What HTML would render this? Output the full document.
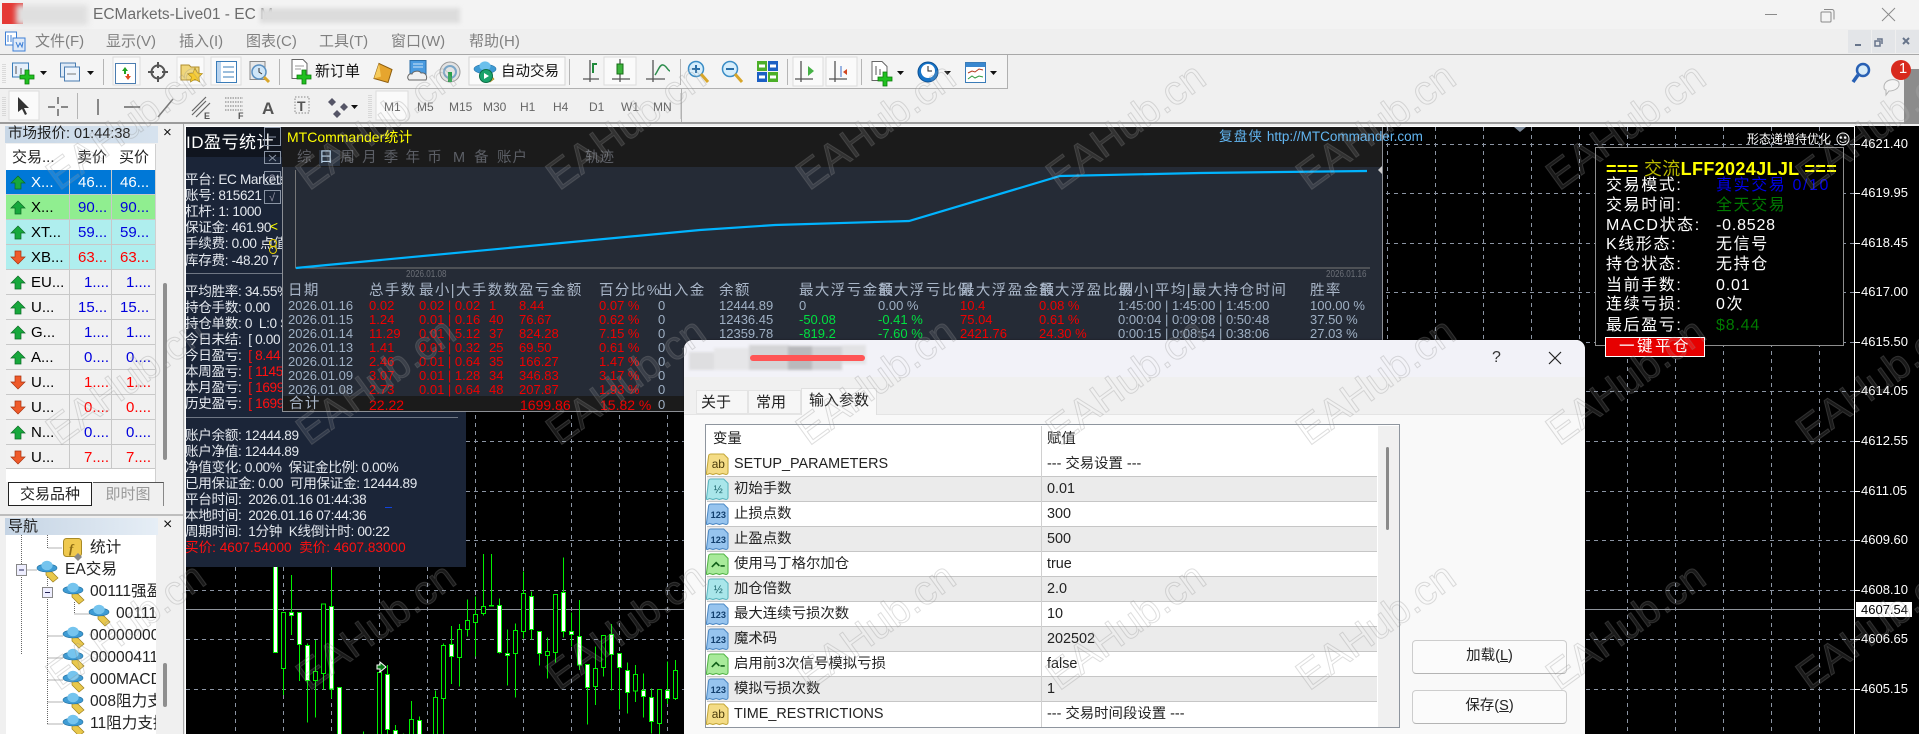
<!DOCTYPE html>
<html lang="zh"><head><meta charset="utf-8"><title>ECMarkets-Live01</title>
<style>
html,body{margin:0;padding:0;width:1919px;height:734px;overflow:hidden;background:#f0f0f0}
body{position:relative;font-family:"Liberation Sans","Noto Sans CJK SC",sans-serif;font-size:15px;color:#000}
.a{position:absolute}
.t{position:absolute;white-space:nowrap;line-height:18px;height:18px}
svg{position:absolute;overflow:visible}
.m{font-size:15px;color:#808080;top:33px}
.tf{font-size:12px;color:#666;top:98px}
.n{font-size:13.6px;color:#e4e8ee;left:185px;letter-spacing:-.35px}
.r{color:#ff1010}
.h{font-size:14.5px;letter-spacing:1.4px;color:#a9b6c8}
.d{font-size:13px;color:#9fb0c4}
.rd{font-size:13px;color:#f00000}
.gr{font-size:13px;color:#00e040}
.p{font-size:13px;color:#fff;left:1861px}
.e{font-size:16px;letter-spacing:1.6px;color:#fff}
.mw{font-size:15px}
.tr{font-size:15.6px;color:#222}
.q{font-size:14.4px;color:#222}
.rw{position:absolute;left:707px;width:670px;height:24px;border-bottom:1px solid #c6c6c6}
.btn{position:absolute;left:1412px;width:153px;height:32px;background:#fbfbfb;border:1px solid #cdcdcd;border-radius:4px;text-align:center;line-height:31px;font-size:14.5px;color:#222;border-bottom-color:#b4b4b4}
.sd{font-size:10.5px;color:#6c7078;transform:scaleX(.77);transform-origin:0 0;top:265px}
</style></head><body>

<!-- title / menu bars -->
<div class="a" style="left:0;top:0;width:1919px;height:29px;background:#f3f3f3"></div>
<div class="a" style="left:0;top:29px;width:1919px;height:25px;background:#efefef"></div>
<div class="a" style="left:0;top:54px;width:1919px;height:1px;background:#a8a8a8"></div>
<div class="a" style="left:0;top:55px;width:1007px;height:33px;background:#f4f4f4;border-bottom:1px solid #b0b0b0;border-right:1px solid #b0b0b0"></div>
<div class="a" style="left:0;top:89px;width:681px;height:33px;border-right:1px solid #b0b0b0"></div>
<div class="a" style="left:0;top:122px;width:1919px;height:2px;background:#9b9b9b"></div>
<div class="a" style="left:2px;top:3px;width:21px;height:21px;background:#e53935"></div>
<div class="a" style="left:16px;top:5px;width:72px;height:20px;background:#dfdfdf;filter:blur(3px)"></div>
<span class="t" style="left:93px;top:6px;font-size:15.5px;color:#6c6c6c">ECMarkets-Live01 - EC M</span>
<div class="a" style="left:260px;top:8px;width:200px;height:15px;background:#dcdcdc;filter:blur(2px)"></div>
<svg style="left:5px;top:30px" width="21" height="22"><rect x="0.5" y="2" width="11" height="13" fill="#fff" stroke="#3d7fd6"/><rect x="8" y="8" width="12" height="13" fill="#dfeaf8" stroke="#3d7fd6"/><path d="M3 5v7M6 5v7M11 12l2 5 2-4 2 4 1-5" fill="none" stroke="#3d7fd6"/></svg>
<span class="t m" style="left:35px">文件(F)</span><span class="t m" style="left:106px">显示(V)</span><span class="t m" style="left:179px">插入(I)</span><span class="t m" style="left:246px">图表(C)</span><span class="t m" style="left:319px">工具(T)</span><span class="t m" style="left:391px">窗口(W)</span><span class="t m" style="left:469px">帮助(H)</span>

<!-- window buttons -->
<svg style="left:1760px;top:4px" width="150" height="22" fill="none" stroke="#8a8a8a" stroke-width="1"><path d="M5 10.5h12"/><path d="M64 5.5h8a2 2 0 0 1 2 2v8M62 8h8a1 1 0 0 1 1 1v8a1 1 0 0 1-1 1h-8a1 1 0 0 1-1-1V9a1 1 0 0 1 1-1z"/><path d="M122 4l13 13M135 4l-13 13"/></svg>
<div class="a" style="left:1848px;top:30px;width:23px;height:23px;background:#e3e5e8"></div>
<div class="a" style="left:1872px;top:30px;width:23px;height:23px;background:#e3e5e8"></div>
<div class="a" style="left:1896px;top:30px;width:23px;height:23px;background:#e3e5e8"></div>
<svg style="left:1848px;top:30px" width="71" height="23" fill="none" stroke="#67748a" stroke-width="2"><path d="M7 15h6"/><path stroke-width="1.5" d="M29 9h5v5M27 11h5v5h-5z"/><path d="M55 8l6 6M61 8l-6 6"/></svg>

<!-- toolbar 1 icons -->
<svg style="left:0;top:55px" width="1007" height="33">
<defs>
<g id="plus"><path d="M5 0h4v5h5v4H9v5H5V9H0V5h5z" fill="#20c020" stroke="#0b7b0b" stroke-width=".8"/></g>
<g id="dd"><path d="M0 0h7l-3.5 4z" fill="#111"/></g>
<g id="hat"><ellipse cx="11" cy="9" rx="11" ry="4.6" fill="#3e9bd4" stroke="#1f6fa5" stroke-width=".6"/><ellipse cx="11" cy="6" rx="5.6" ry="4.6" fill="#6bc0ec"/><path d="M11 12l5 2 4 5-4 3-5-5z" fill="#e8c64a" stroke="#a98a1f" stroke-width=".7"/></g>
</defs>
<path d="M3 9v19M5 9v19" stroke="#c0c0c0" stroke-dasharray="1 1"/>
<g transform="translate(12 6)"><rect x=".5" y="2" width="16" height="14" fill="#e6f0fb" stroke="#3a7cb8"/><path d="M4 5v8M9 7v6" stroke="#555"/><use href="#plus" x="8" y="9"/></g>
<use href="#dd" x="40" y="16"/>
<g transform="translate(60 6)"><rect x=".5" y="2" width="15" height="14" fill="#dfeaf6" stroke="#4a7cb0"/><rect x="4.500" y="6" width="15" height="14" fill="#eef4fb" stroke="#4a7cb0"/><path d="M7 13h9" stroke="#777"/></g>
<use href="#dd" x="87" y="16"/>
<path d="M103.500 4v26M279.500 4v26M569.500 4v26M680.500 4v26M787.500 4v26M861.500 4v26" stroke="#b5b5b5"/>
<rect x="113" y="2" width="27" height="28" fill="#fafafa" stroke="#dcdcdc"/>
<g transform="translate(115 8)"><rect x=".5" y=".5" width="20" height="20" fill="#fff" stroke="#4a7cb0"/><path d="M7 8l3-4 3 4h-2v3H9V8z" fill="#21a321"/><path d="M10 17l3-4h-2v-2H9v2H7z" fill="#e24a20" transform="translate(3 0)"/></g>
<g transform="translate(148 7)" fill="none" stroke="#555" stroke-width="2"><circle cx="10" cy="10" r="6.500"/><path d="M10 0v6M10 14v6M0 10h6M14 10h6"/></g>
<rect x="177" y="2" width="27" height="28" fill="#fafafa" stroke="#e2e2e2"/>
<g transform="translate(180 7)"><path d="M1 3h8l2 2h8v13H1z" fill="#f0d67a" stroke="#b08d2d"/><path d="M15 6l2.500 5 5 .6-3.700 3.400 1 5-4.800-2.600-4.600 2.600 1-5-3.800-3.400 5.300-.6z" fill="#f5c92e" stroke="#a58316" stroke-width=".6"/></g>
<rect x="211" y="2" width="30" height="28" fill="#fafafa" stroke="#dcdcdc"/>
<g transform="translate(216 6)"><rect x=".5" y=".5" width="20" height="21" fill="#fff" stroke="#3a7cb8"/><rect x="1" y="1" width="4" height="20" fill="#b9d4ef"/><path d="M7 6h11M7 11h11M7 16h11" stroke="#3a7cb8"/></g>
<g transform="translate(249 6)"><rect x="1" y=".5" width="15" height="18" fill="#e8e8e8" stroke="#888"/><circle cx="10" cy="11" r="7" fill="#cfe6f8" stroke="#5a8fc0" stroke-width="1.500"/><path d="M10 7v4l3 2" stroke="#333" fill="none"/><path d="M15 16l5 5" stroke="#d9a62a" stroke-width="3"/></g>
<g transform="translate(290 4)"><path d="M2 .5h11l4 4v15H2z" fill="#fff" stroke="#666"/><path d="M5 7h9M5 10h6" stroke="#999"/><use href="#plus" x="7" y="11"/></g>
<g transform="translate(372 8)"><path d="M7 .5l13 6-4 13-14-4z" fill="#e6a52e" stroke="#8c5d0e"/><path d="M7 .5L2 15.500l7-2z" fill="#f6cb5c"/></g>
<g transform="translate(407 5)"><rect x="3" y=".5" width="16" height="16" fill="#4a9be0" stroke="#2c6ea6"/><path d="M6 4h10M6 7h10" stroke="#cfe6f8"/><path d="M2 20c-3-3 0-7 3-6 1-3 7-4 9-1 4-1 7 3 5 7z" fill="#f0f0f0" stroke="#666"/></g>
<g transform="translate(440 6)" fill="none"><circle cx="10" cy="11" r="10" fill="#e3e3e3" stroke="#999"/><circle cx="10" cy="11" r="6" stroke="#7ba7c8" stroke-width="2"/><path d="M10 11v10" stroke="#27a14c" stroke-width="4"/></g>
<rect x="469" y="2" width="96" height="28" fill="#fbfbfb" stroke="#d4d4d4"/>
<g transform="translate(474 5)"><use href="#hat"/><circle cx="12" cy="16" r="6.500" fill="#19a36b" stroke="#0b6d44"/><path d="M10 13l5 3-5 3z" fill="#fff"/></g>
<g fill="none" stroke="#555" stroke-width="1.300"><path d="M590 5v22M583 24h16" /><path d="M617 5v22M610 24h20"/><path d="M653 5v22M646 24h19"/><path d="M801 6v22M795 24h16"/><path d="M835 6v22M829 24h18"/></g>
<path d="M593 18v-9h4" stroke="#1f8a3b" stroke-width="2" fill="none"/>
<rect x="604" y="2" width="32" height="28" fill="#fafafa" stroke="#dcdcdc"/>
<path d="M620 4v23M612 24h18" stroke="#555" stroke-width="1.300"/><rect x="617" y="9" width="6" height="10" fill="#3cb33c" stroke="#176d17"/>
<path d="M655 20c3-4 5-11 8-10 3 0 5 6 7 6" stroke="#2d8c4d" stroke-width="1.500" fill="none"/>
<g transform="translate(688 5)"><circle cx="8" cy="9" r="7.500" fill="#d6eefc" stroke="#3b8dc6" stroke-width="1.500"/><path d="M8 5v8M4 9h8" stroke="#2a6fa8" stroke-width="2"/><path d="M13 14l7 8" stroke="#d8a62a" stroke-width="3"/></g>
<g transform="translate(722 5)"><circle cx="8" cy="9" r="7.500" fill="#d6eefc" stroke="#3b8dc6" stroke-width="1.500"/><path d="M4 9h8" stroke="#2a6fa8" stroke-width="2"/><path d="M13 14l7 8" stroke="#d8a62a" stroke-width="3"/></g>
<g transform="translate(757 6)"><rect width="10" height="10" fill="#4caf28"/><rect x="11" width="10" height="10" fill="#1c5fc4"/><rect y="11" width="10" height="10" fill="#1c5fc4"/><rect x="11" y="11" width="10" height="10" fill="#4caf28"/><path d="M2 5h6M13 5h6M2 16h6M13 16h6" stroke="#fff" stroke-width="3"/></g>
<rect x="793" y="2" width="30" height="29" fill="#fafafa" stroke="#dcdcdc"/><rect x="826" y="2" width="31" height="29" fill="#fafafa" stroke="#dcdcdc"/>
<path d="M801 6v21M795 24h18" stroke="#555" stroke-width="1.300" fill="none"/><path d="M835 6v21M829 24h18" stroke="#555" stroke-width="1.300" fill="none"/>
<path d="M808 11l6 5-6 5z" fill="#45b245"/><path d="M841 11v11" stroke="#3a6ec9"/><path d="M847 14l-4 3 4 3z" fill="#d04520"/>
<g transform="translate(872 6)"><path d="M0 .5h10l5 5v14H0z" fill="#fff" stroke="#666"/><path d="M4 5v9M8 8v6" stroke="#555"/><use href="#plus" x="6" y="11"/></g><use href="#dd" x="897" y="16"/>
<g transform="translate(918 6)"><circle cx="10" cy="11" r="10" fill="#1674c8" stroke="#0d4f91"/><circle cx="10" cy="10" r="7" fill="#fff"/><path d="M10 5v5h4" stroke="#222" fill="none"/></g><use href="#dd" x="944" y="16"/>
<g transform="translate(965 7)"><rect x=".5" y=".5" width="20" height="20" fill="#fff" stroke="#3a7cb8"/><rect x="1" y="1" width="19" height="4" fill="#3a88d0"/><path d="M3 11l4-2 3 1 4-3 4 1" stroke="#b13a1e" fill="none"/><path d="M3 17l4-3 3 2 4-2 4 1" stroke="#2e9b3e" fill="none"/></g><use href="#dd" x="990" y="16"/>
</svg>
<span class="t" style="left:315px;top:63px;font-size:15px;color:#111">新订单</span>
<span class="t" style="left:501px;top:63px;font-size:14.5px;color:#111">自动交易</span>

<!-- right top icons -->
<svg style="left:1848px;top:60px" width="71" height="64"><rect x="56" y="9" width="15" height="55" fill="#8c8c8c"/><circle cx="15" cy="10" r="6" fill="#d8ecf9" stroke="#2860b4" stroke-width="2.500"/><path d="M10 15l-5 7" stroke="#2860b4" stroke-width="3.500"/><path d="M36 27c0-9 14-9 15-4 1 6-6 8-10 8l-3 4v-5c-2 0-2-2-2-3z" fill="#f4f4f4" stroke="#b4b4b4"/><circle cx="53" cy="10" r="10" fill="#d8291d"/></svg>
<span class="t" style="left:1896px;top:60px;width:14px;text-align:center;color:#fff;font-size:15px">1</span>

<!-- toolbar 2 -->
<svg style="left:0;top:89px" width="690" height="33">
<path d="M3 8v20M5 8v20M369 6v24M371 6v24" stroke="#c0c0c0" stroke-dasharray="1 1"/>
<path d="M77.500 4v26M681 4v26" stroke="#b5b5b5"/>
<rect x="9" y="2" width="30" height="29" fill="#fafafa" stroke="#dcdcdc"/>
<rect x="376" y="2" width="32" height="29" fill="#fafafa" stroke="#dcdcdc"/>
<path d="M18 8l11 11h-5l3 6-2 1-3-6-4 3z" fill="#333"/>
<path d="M58 8v7M58 20v7M48 18h7M61 18h7" stroke="#666" stroke-width="1.500" fill="none"/>
<path d="M98 10v16" stroke="#666" stroke-width="1.500"/>
<path d="M124 18h16" stroke="#666" stroke-width="1.500"/>
<path d="M158 28l15-18" stroke="#777" stroke-width="1.500"/>
<path d="M192 22l14-14M192 26l14-14M196 28l14-14" stroke="#666" stroke-width="1.200"/><text x="204" y="30" font-size="9" fill="#555" font-weight="bold">E</text>
<path d="M225 9h18M225 13h18M225 17h18M225 21h18" stroke="#777" stroke-dasharray="1.500 1" /><text x="238" y="30" font-size="9" fill="#555" font-weight="bold">F</text>
<text x="262" y="25" font-size="17" fill="#555" font-weight="bold">A</text>
<rect x="295" y="8" width="14" height="16" fill="none" stroke="#888" stroke-dasharray="1.500 1.500"/><text x="297" y="22" font-size="14" fill="#555" font-weight="bold">T</text>
<path d="M332 9l4 4-4 4-4-4zM344 14l4 4-4 4-4-4zM337 21l4 4-4 4-4-4z" fill="#556"/><path d="M351 16h7l-3.500 4z" fill="#111"/>
</svg>
<span class="t tf" style="left:384px">M1</span><span class="t tf" style="left:417px">M5</span><span class="t tf" style="left:449px">M15</span><span class="t tf" style="left:483px">M30</span><span class="t tf" style="left:520px">H1</span><span class="t tf" style="left:553px">H4</span><span class="t tf" style="left:589px">D1</span><span class="t tf" style="left:621px">W1</span><span class="t tf" style="left:653px">MN</span>

<!-- market watch -->
<div class="a" style="left:5px;top:126px;width:153px;height:17px;background:linear-gradient(90deg,#c8d7e6,#d6e2ee)"></div>
<span class="t" style="left:8px;top:125px;font-size:14.5px;color:#222">市场报价: 01:44:38</span>
<span class="t" style="left:163px;top:124px;font-size:15px;color:#111">×</span>
<div class="a" style="left:6px;top:144px;width:149px;height:338px;background:#fff"></div>
<div class="a" style="left:155px;top:144px;width:1px;height:338px;background:#d0d0d0"></div>
<span class="t mw" style="left:12px;top:149px;color:#222">交易...</span><span class="t mw" style="left:77px;top:149px;color:#222">卖价</span><span class="t mw" style="left:119px;top:149px;color:#222">买价</span>
<div class="a" style="left:6px;top:170px;width:149px;height:25px;background:#0078d7"></div>
<div class="a" style="left:6px;top:195px;width:149px;height:25px;background:#90ee90"></div>
<div class="a" style="left:6px;top:220px;width:149px;height:50px;background:#afeeee"></div>
<div class="a" style="left:6px;top:270px;width:149px;height:199px;background:#f1f1f1"></div>
<svg style="left:0;top:0" width="190" height="480"><path d="M69.500 170v299M111.500 170v299M6 194.500h149M6 219.500h149M6 244.500h149M6 269.500h149M6 294.500h149M6 319.500h149M6 344.500h149M6 369.500h149M6 394.500h149M6 419.500h149M6 444.500h149M6 468.500h149" stroke="#c8c8c8" fill="none"/>
<defs><path id="up" d="M7 0l7 7h-4v6H4V7H0z" fill="#17a83c" stroke="#0b6a24" stroke-width=".7"/><path id="dn" d="M4 0h6v6h4l-7 7-7-7h4z" fill="#ef5a2a" stroke="#a8320f" stroke-width=".7"/></defs>
<use href="#up" x="11" y="176"/><use href="#up" x="11" y="201"/><use href="#up" x="11" y="226"/><use href="#dn" x="11" y="251"/><use href="#up" x="11" y="276"/><use href="#up" x="11" y="301"/><use href="#up" x="11" y="326"/><use href="#up" x="11" y="351"/><use href="#dn" x="11" y="376"/><use href="#dn" x="11" y="401"/><use href="#up" x="11" y="426"/><use href="#dn" x="11" y="451"/></svg>
<span class="t mw" style="left:31px;top:174px;color:#fff">X...</span><span class="t mw" style="left:78px;top:174px;color:#fff">46...</span><span class="t mw" style="left:120px;top:174px;color:#fff">46...</span>
<span class="t mw" style="left:31px;top:199px">X...</span><span class="t mw" style="left:78px;top:199px;color:#00d">90...</span><span class="t mw" style="left:120px;top:199px;color:#00d">90...</span>
<span class="t mw" style="left:31px;top:224px">XT...</span><span class="t mw" style="left:78px;top:224px;color:#00d">59...</span><span class="t mw" style="left:120px;top:224px;color:#00d">59...</span>
<span class="t mw" style="left:31px;top:249px">XB...</span><span class="t mw" style="left:78px;top:249px;color:#f00">63...</span><span class="t mw" style="left:120px;top:249px;color:#f00">63...</span>
<span class="t mw" style="left:31px;top:274px">EU...</span><span class="t mw" style="left:84px;top:274px;color:#00d">1....</span><span class="t mw" style="left:126px;top:274px;color:#00d">1....</span>
<span class="t mw" style="left:31px;top:299px">U...</span><span class="t mw" style="left:78px;top:299px;color:#00d">15...</span><span class="t mw" style="left:120px;top:299px;color:#00d">15...</span>
<span class="t mw" style="left:31px;top:324px">G...</span><span class="t mw" style="left:84px;top:324px;color:#00d">1....</span><span class="t mw" style="left:126px;top:324px;color:#00d">1....</span>
<span class="t mw" style="left:31px;top:349px">A...</span><span class="t mw" style="left:84px;top:349px;color:#00d">0....</span><span class="t mw" style="left:126px;top:349px;color:#00d">0....</span>
<span class="t mw" style="left:31px;top:374px">U...</span><span class="t mw" style="left:84px;top:374px;color:#f00">1....</span><span class="t mw" style="left:126px;top:374px;color:#f00">1....</span>
<span class="t mw" style="left:31px;top:399px">U...</span><span class="t mw" style="left:84px;top:399px;color:#f00">0....</span><span class="t mw" style="left:126px;top:399px;color:#f00">0....</span>
<span class="t mw" style="left:31px;top:424px">N...</span><span class="t mw" style="left:84px;top:424px;color:#00d">0....</span><span class="t mw" style="left:126px;top:424px;color:#00d">0....</span>
<span class="t mw" style="left:31px;top:449px">U...</span><span class="t mw" style="left:84px;top:449px;color:#f00">7....</span><span class="t mw" style="left:126px;top:449px;color:#f00">7....</span>
<div class="a" style="left:163px;top:283px;width:4px;height:177px;background:#8f8f8f;border-radius:2px"></div>
<!-- tabs -->
<div class="a" style="left:8px;top:482px;width:84px;height:24px;background:#fff;border:1px solid #222;box-sizing:border-box;text-align:center;line-height:24px;font-size:15px;color:#222">交易品种</div>
<div class="a" style="left:93px;top:482px;width:71px;height:24px;border-top:1px solid #555;border-right:1px solid #888;box-sizing:border-box;text-align:center;line-height:24px;font-size:15px;color:#999">即时图</div>
<div class="a" style="left:0;top:514px;width:183px;height:2px;background:#bdbdbd"></div>
<!-- navigator -->
<div class="a" style="left:5px;top:518px;width:153px;height:17px;background:linear-gradient(90deg,#c5d4e4,#e6eef6)"></div>
<span class="t" style="left:8px;top:518px;font-size:15px;color:#222">导航</span>
<span class="t" style="left:163px;top:516px;font-size:16px;color:#111">×</span>
<div class="a" style="left:6px;top:535px;width:150px;height:199px;background:#fff;overflow:hidden">
<svg style="left:-6px;top:-535px" width="170" height="734">
<defs><g id="hat2"><path d="M9 11l6 1 6 6-5 4-7-7z" fill="#e9c84c" stroke="#a0821d" stroke-width=".7"/><ellipse cx="10" cy="8" rx="10" ry="4" fill="#3e9bd4" stroke="#226f9e" stroke-width=".6"/><ellipse cx="10" cy="5.500" rx="5.600" ry="4.800" fill="#75c4ee"/></g></defs>
<path d="M21.500 535v120M47.500 535v13h15M21.500 570h15M47.500 575v150M74.500 602v12h15M47.500 636h15M47.500 658h15M47.500 680h15M47.500 702h15M47.500 724h15M47.500 592h-3" stroke="#666" stroke-dasharray="1 1" fill="none"/>
<rect x="63.500" y="538.500" width="18" height="18" rx="3" fill="#f0c94e" stroke="#a88a25"/><text x="69" y="553" font-size="13" font-style="italic" font-family="Liberation Serif" font-weight="bold" fill="#8b6a12">f</text><path d="M78 553l4 4-4 4-4-4z" fill="#888"/>
<rect x="16.500" y="564.500" width="10" height="11" fill="#eef" stroke="#888"/><path d="M19 570h5" stroke="#225" />
<rect x="42.500" y="587.500" width="10" height="10" fill="#eef" stroke="#888"/><path d="M45 592.500h5" stroke="#225"/>
<use href="#hat2" x="37" y="560"/><use href="#hat2" x="63" y="582"/><use href="#hat2" x="89" y="604"/><use href="#hat2" x="63" y="626"/><use href="#hat2" x="63" y="648"/><use href="#hat2" x="63" y="670"/><use href="#hat2" x="63" y="692"/><use href="#hat2" x="63" y="714"/>
</svg>
<span class="t tr" style="left:84px;top:4px">统计</span>
<span class="t tr" style="left:59px;top:26px">EA交易</span>
<span class="t tr" style="left:84px;top:48px">00111强盈</span>
<span class="t tr" style="left:110px;top:70px">00111</span>
<span class="t tr" style="left:84px;top:92px">00000000</span>
<span class="t tr" style="left:84px;top:114px">00000411</span>
<span class="t tr" style="left:84px;top:136px">000MACD</span>
<span class="t tr" style="left:84px;top:158px">008阻力支</span>
<span class="t tr" style="left:84px;top:180px">11阻力支撑</span>
</div>
<div class="a" style="left:156px;top:535px;width:15px;height:199px;background:#f0f0f0"></div>
<div class="a" style="left:163px;top:663px;width:4px;height:44px;background:#8f8f8f;border-radius:2px"></div>
<div class="a" style="left:183px;top:124px;width:1px;height:610px;background:#aaa"></div>

<!-- chart -->
<div class="a" style="left:185px;top:126px;width:1734px;height:608px;background:#000"></div>
<svg style="left:0;top:0" width="1919" height="734">
<defs><pattern id="vg" x="235" y="127" width="48" height="8" patternUnits="userSpaceOnUse"><rect width="1" height="4" fill="#8b94a3"/></pattern></defs>
<rect x="235" y="127" width="1619" height="607" fill="url(#vg)"/>
<path d="M186 144.500H1854M186 193.500H1854M186 243.500H1854M186 292.500H1854M186 342.500H1854M186 391.500H1854M186 441.500H1854M186 491.500H1854M186 540.500H1854M186 590.500H1854M186 639.500H1854M186 689.500H1854" stroke="#8b94a3" stroke-dasharray="4 4"/>
<path d="M186 609.500H1854" stroke="#8f949c"/>
<path d="M185 126.500H1854.500V734" stroke="#fff" fill="none"/>
<path d="M1855 144.500h5M1855 193.500h5M1855 243.500h5M1855 292.500h5M1855 342.500h5M1855 391.500h5M1855 441.500h5M1855 491.500h5M1855 540.500h5M1855 590.500h5M1855 639.500h5M1855 689.500h5" stroke="#fff"/>
<path d="M1514 127h12l-6 5z" fill="#7d8a9a"/>
<g transform="translate(180 420) scale(.33333)" stroke="#00f000" stroke-width="3" shape-rendering="crispEdges">
<path fill="none" d="M310 745V825M334 465V645M358 673V783M382 670V908M406 660V893M430 760V808M454 450V835M550 935V960M598 900V960M622 735V960M646 915V960M670 940V960M694 843V960M718 890V960M766 812V960M790 670V960M814 618V792M838 612V800M862 538V650M886 530V710M910 402V587M934 402V560M958 535V700M982 628V797M1006 610V833M1030 455V655M1054 515V658M1078 635V737M1102 652V776M1126 523V728M1150 412V653M1174 577V680M1198 540V750M1222 734V914M1246 680V855M1270 647V770M1294 612V812M1318 701V868M1342 727V880M1366 735V846M1390 760V892M1414 805V940M1438 809V960M1462 725V852M1486 720V840"/>
<g fill="#fff">
<rect x="280" y="430" width="13" height="267"/><rect x="328" y="578" width="13" height="8"/><rect x="352" y="577" width="13" height="96"/><rect x="376" y="677" width="13" height="104"/><rect x="448" y="560" width="13" height="247"/><rect x="472" y="802" width="13" height="160"/><rect x="616" y="764" width="13" height="164"/><rect x="640" y="932" width="13" height="30"/><rect x="712" y="902" width="13" height="60"/><rect x="808" y="673" width="13" height="36"/><rect x="928" y="556" width="13" height="2"/><rect x="952" y="557" width="13" height="140"/><rect x="976" y="701" width="13" height="5"/><rect x="1048" y="530" width="13" height="98"/><rect x="1072" y="635" width="13" height="65"/><rect x="1144" y="518" width="13" height="116"/><rect x="1168" y="635" width="13" height="8"/><rect x="1192" y="650" width="13" height="85"/><rect x="1216" y="734" width="13" height="68"/><rect x="1288" y="644" width="13" height="59"/><rect x="1312" y="701" width="13" height="41"/><rect x="1336" y="752" width="13" height="65"/><rect x="1384" y="811" width="13" height="18"/><rect x="1408" y="833" width="13" height="71"/><rect x="1456" y="812" width="13" height="23"/>
</g>
<g fill="#000">
<rect x="304" y="577" width="13" height="168"/><rect x="400" y="754" width="13" height="28"/><rect x="424" y="552" width="13" height="208"/><rect x="592" y="757" width="13" height="205"/><rect x="688" y="898" width="13" height="64"/><rect x="760" y="832" width="13" height="130"/><rect x="784" y="676" width="13" height="159"/><rect x="832" y="628" width="13" height="84"/><rect x="856" y="601" width="13" height="27"/><rect x="880" y="583" width="13" height="24"/><rect x="904" y="560" width="13" height="20"/><rect x="1000" y="631" width="13" height="69"/><rect x="1024" y="520" width="13" height="114"/><rect x="1096" y="695" width="13" height="12"/><rect x="1120" y="523" width="13" height="174"/><rect x="1240" y="745" width="13" height="55"/><rect x="1264" y="647" width="13" height="95"/><rect x="1360" y="764" width="13" height="49"/><rect x="1432" y="809" width="13" height="101"/><rect x="1480" y="752" width="13" height="83"/>
</g></g>
<path d="M380 662l6 5-6 5v-3h-3v-4h3z" fill="#0a7a18" stroke="#fff"/>
</svg>
<span class="t p" style="top:135px">4621.40</span><span class="t p" style="top:184px">4619.95</span><span class="t p" style="top:234px">4618.45</span><span class="t p" style="top:283px">4617.00</span><span class="t p" style="top:333px">4615.50</span><span class="t p" style="top:382px">4614.05</span><span class="t p" style="top:432px">4612.55</span><span class="t p" style="top:482px">4611.05</span><span class="t p" style="top:531px">4609.60</span><span class="t p" style="top:581px">4608.10</span><span class="t p" style="top:630px">4606.65</span><span class="t p" style="top:680px">4605.15</span>
<div class="a" style="left:1856px;top:602px;width:56px;height:15px;background:#fff;color:#000;font-size:13px;line-height:15px;padding-left:5px;box-sizing:border-box">4607.54</div>

<!-- navy panel -->
<div class="a" style="left:186px;top:127px;width:280px;height:440px;background:#1b2538"></div>
<div class="a" style="left:186px;top:127px;width:96px;height:30px;background:#10151f"></div>
<span class="t" style="left:186px;top:134px;font-size:17px;color:#fff;letter-spacing:.5px">ID盈亏统计</span>
<span class="t n" style="top:171px">平台: EC Markets</span>
<span class="t n" style="top:187px">账号: 815621</span>
<span class="t n" style="top:203px">杠杆: 1: 1000</span>
<span class="t n" style="top:219px">保证金: 461.90</span><span class="t" style="left:270px;top:218px;color:#ff0;font-size:13.6px">&lt;</span>
<span class="t n" style="top:235px">手续费: 0.00 点值</span>
<span class="t n" style="top:252px">库存费: -48.20 7</span>
<div class="a" style="left:186px;top:273px;width:96px;height:1px;background:#6f7784"></div>
<span class="t n" style="top:283px">平均胜率: 34.55%</span>
<span class="t n" style="top:299px">持仓手数: 0.00</span>
<span class="t n" style="top:315px">持仓单数: 0&nbsp; L:0 S:0</span>
<span class="t n" style="top:331px">今日未结:&nbsp; [ 0.00 ]</span>
<span class="t n" style="top:347px">今日盈亏:&nbsp; <span class="r">[ 8.44 ]</span></span>
<span class="t n" style="top:363px">本周盈亏:&nbsp; <span class="r">[ 1145.86 ]</span></span>
<span class="t n" style="top:379px">本月盈亏:&nbsp; <span class="r">[ 1699.86 ]</span></span>
<span class="t n" style="top:395px">历史盈亏:&nbsp; <span class="r">[ 1699.86 ]</span></span>
<div class="a" style="left:186px;top:417px;width:272px;height:1px;background:#6f7784"></div>
<span class="t n" style="top:427px">账户余额: 12444.89</span>
<span class="t n" style="top:443px">账户净值: 12444.89</span>
<span class="t n" style="top:459px">净值变化: 0.00%&nbsp; 保证金比例: 0.00%</span>
<span class="t n" style="top:475px">已用保证金: 0.00&nbsp; 可用保证金: 12444.89</span>
<span class="t n" style="top:491px">平台时间:&nbsp; 2026.01.16 01:44:38</span>
<span class="t n" style="top:507px">本地时间:&nbsp; 2026.01.16 07:44:36</span>
<span class="t n" style="top:523px">周期时间:&nbsp; 1分钟&nbsp; K线倒计时: 00:22</span>
<span class="t n" style="top:539px;color:#ff1010;letter-spacing:0">买价: 4607.54000&nbsp; 卖价: 4607.83000</span>
<div class="a" style="left:385px;top:507px;width:7px;height:1px;background:#14d"></div>
<div class="a" style="left:184px;top:126px;width:1px;height:608px;background:#e8e8e8"></div>
<div class="a" style="left:185px;top:126px;width:1px;height:608px;background:#fff"></div>
<svg style="left:264px;top:127px" width="20" height="150" fill="none" stroke="#8a94a4"><rect x=".5" y=".5" width="16" height="18"/><rect x=".5" y="24.500" width="16" height="12"/><rect x=".5" y="44.500" width="16" height="13"/><rect x=".5" y="63.500" width="16" height="13"/><path d="M5 10h7"/><path d="M5 28l7 6M12 28l-7 6"/><text x="5" y="55" font-size="11" fill="#99a" stroke="none">?</text><text x="5" y="74" font-size="11" fill="#99a" stroke="none">√</text><circle cx="9" cy="116" r="3.500" stroke="#e6d000"/><circle cx="9" cy="123" r="3.500" stroke="#e6d000"/></svg>

<!-- MT Commander panel -->
<div class="a" style="left:282px;top:127px;width:1100px;height:284px;background:#252b36"></div>
<div class="a" style="left:282px;top:127px;width:1100px;height:40px;background:#1b1b1b"></div>
<div class="a" style="left:282px;top:396px;width:1100px;height:15px;background:#1b1b1b"></div>
<div class="a" style="left:282px;top:167px;width:1px;height:244px;background:#8c8f95"></div>
<div class="a" style="left:1382px;top:127px;width:1px;height:284px;background:#8c8f95"></div>
<div class="a" style="left:282px;top:411px;width:1101px;height:1px;background:#8c8f95"></div>
<span class="t" style="left:287px;top:128px;font-size:14px;color:#ff0">MTCommander统计</span>
<span class="t" style="left:1219px;top:128px;font-size:13.5px;color:#62b6f2"><span style="letter-spacing:1.200px">复盘侠</span> http://MTCommander.com</span>
<span class="t" style="left:297px;top:149px;font-size:14.5px;color:#5c5f66;letter-spacing:7.200px">综<span style="color:#b9d2e8;background:#2a3340">日</span>周月季年币</span>
<span class="t" style="left:453px;top:149px;font-size:14.5px;color:#5c5f66;letter-spacing:9px">M备</span>
<span class="t" style="left:497px;top:149px;font-size:14.5px;color:#5c5f66;letter-spacing:1px">账户</span>
<span class="t" style="left:585px;top:149px;font-size:14.5px;color:#5c5f66">轨迹</span>
<svg style="left:0;top:0" width="1400" height="300" fill="none"><path d="M295.500 170v98H1370" stroke="#777"/><path d="M296 268l31-3 373-35 75-5 134-4 151-45 140-3 167-2" stroke="#00b4ff" stroke-width="2.200"/><path d="M1382 166l-4 4 4 4z" fill="#ccc"/></svg>
<span class="t sd" style="left:406px">2026.01.08</span>
<span class="t sd" style="left:1326px">2026.01.16</span>

<span class="t h" style="left:288px;top:282px">日期</span><span class="t h" style="left:369px;top:282px">总手数</span><span class="t h" style="left:419px;top:282px">最小|大手数数</span><span class="t h" style="left:519px;top:282px">盈亏金额</span><span class="t h" style="left:599px;top:282px">百分比%</span><span class="t h" style="left:658px;top:282px">出入金</span><span class="t h" style="left:719px;top:282px">余额</span><span class="t h" style="left:799px;top:282px">最大浮亏金额</span><span class="t h" style="left:878px;top:282px">最大浮亏比例</span><span class="t h" style="left:960px;top:282px">最大浮盈金额</span><span class="t h" style="left:1039px;top:282px">最大浮盈比例</span><span class="t h" style="left:1118px;top:282px">最小|平均|最大持仓时间</span><span class="t h" style="left:1310px;top:282px">胜率</span>

<span class="t d" style="left:288px;top:297px">2026.01.16</span><span class="t rd" style="left:369px;top:297px">0.02</span><span class="t rd" style="left:419px;top:297px">0.02 | 0.02</span><span class="t rd" style="left:489px;top:297px">1</span><span class="t rd" style="left:519px;top:297px">8.44</span><span class="t rd" style="left:599px;top:297px">0.07 %</span><span class="t d" style="left:658px;top:297px">0</span><span class="t d" style="left:719px;top:297px">12444.89</span><span class="t d" style="left:799px;top:297px">0</span><span class="t d" style="left:878px;top:297px">0.00 %</span><span class="t rd" style="left:960px;top:297px">10.4</span><span class="t rd" style="left:1039px;top:297px">0.08 %</span><span class="t d" style="left:1118px;top:297px">1:45:00 | 1:45:00 | 1:45:00</span><span class="t d" style="left:1310px;top:297px">100.00 %</span>

<span class="t d" style="left:288px;top:311px">2026.01.15</span><span class="t rd" style="left:369px;top:311px">1.24</span><span class="t rd" style="left:419px;top:311px">0.01 | 0.16</span><span class="t rd" style="left:489px;top:311px">40</span><span class="t rd" style="left:519px;top:311px">76.67</span><span class="t rd" style="left:599px;top:311px">0.62 %</span><span class="t d" style="left:658px;top:311px">0</span><span class="t d" style="left:719px;top:311px">12436.45</span><span class="t gr" style="left:799px;top:311px">-50.08</span><span class="t gr" style="left:878px;top:311px">-0.41 %</span><span class="t rd" style="left:960px;top:311px">75.04</span><span class="t rd" style="left:1039px;top:311px">0.61 %</span><span class="t d" style="left:1118px;top:311px">0:00:04 | 0:09:08 | 0:50:48</span><span class="t d" style="left:1310px;top:311px">37.50 %</span>

<span class="t d" style="left:288px;top:325px">2026.01.14</span><span class="t rd" style="left:369px;top:325px">11.29</span><span class="t rd" style="left:419px;top:325px">0.01 | 5.12</span><span class="t rd" style="left:489px;top:325px">37</span><span class="t rd" style="left:519px;top:325px">824.28</span><span class="t rd" style="left:599px;top:325px">7.15 %</span><span class="t d" style="left:658px;top:325px">0</span><span class="t d" style="left:719px;top:325px">12359.78</span><span class="t gr" style="left:799px;top:325px">-819.2</span><span class="t gr" style="left:878px;top:325px">-7.60 %</span><span class="t rd" style="left:960px;top:325px">2421.76</span><span class="t rd" style="left:1039px;top:325px">24.30 %</span><span class="t d" style="left:1118px;top:325px">0:00:15 | 0:08:54 | 0:38:06</span><span class="t d" style="left:1310px;top:325px">27.03 %</span>

<span class="t d" style="left:288px;top:339px">2026.01.13</span><span class="t rd" style="left:369px;top:339px">1.41</span><span class="t rd" style="left:419px;top:339px">0.01 | 0.32</span><span class="t rd" style="left:489px;top:339px">25</span><span class="t rd" style="left:519px;top:339px">69.50</span><span class="t rd" style="left:599px;top:339px">0.61 %</span><span class="t d" style="left:658px;top:339px">0</span>
<span class="t d" style="left:288px;top:353px">2026.01.12</span><span class="t rd" style="left:369px;top:353px">2.46</span><span class="t rd" style="left:419px;top:353px">0.01 | 0.64</span><span class="t rd" style="left:489px;top:353px">35</span><span class="t rd" style="left:519px;top:353px">166.27</span><span class="t rd" style="left:599px;top:353px">1.47 %</span><span class="t d" style="left:658px;top:353px">0</span>
<span class="t d" style="left:288px;top:367px">2026.01.09</span><span class="t rd" style="left:369px;top:367px">3.07</span><span class="t rd" style="left:419px;top:367px">0.01 | 1.28</span><span class="t rd" style="left:489px;top:367px">34</span><span class="t rd" style="left:519px;top:367px">346.83</span><span class="t rd" style="left:599px;top:367px">3.17 %</span><span class="t d" style="left:658px;top:367px">0</span>
<span class="t d" style="left:288px;top:381px">2026.01.08</span><span class="t rd" style="left:369px;top:381px">2.73</span><span class="t rd" style="left:419px;top:381px">0.01 | 0.64</span><span class="t rd" style="left:489px;top:381px">48</span><span class="t rd" style="left:519px;top:381px">207.87</span><span class="t rd" style="left:599px;top:381px">1.93 %</span><span class="t d" style="left:658px;top:381px">0</span>
<span class="t h" style="left:289px;top:395px">合计</span><span class="t rd" style="left:369px;top:396px;font-size:14px">22.22</span><span class="t rd" style="left:520px;top:396px;font-size:14px">1699.86</span><span class="t rd" style="left:600px;top:396px;font-size:14px">15.82 %</span><span class="t d" style="left:658px;top:396px">0</span>

<!-- EA panel -->
<span class="t" style="left:1747px;top:130px;font-size:12px;color:#fff">形态递增待优化</span>
<svg style="left:1836px;top:132px" width="14" height="14" fill="none" stroke="#fff"><circle cx="7" cy="7" r="6"/><circle cx="4.800" cy="5.500" r=".8" fill="#fff"/><circle cx="9.200" cy="5.500" r=".8" fill="#fff"/><path d="M3.800 8.500c1 2.500 5.400 2.500 6.400 0"/></svg>
<div class="a" style="left:1595px;top:147px;width:249px;height:199px;box-sizing:border-box;border:1px solid #8d8d8d;background:#000"></div>
<span class="t" style="left:1606px;top:160px;font-size:18px;color:#ff0;font-weight:bold;letter-spacing:.35px">=== <span style="color:#b9b900;font-weight:normal">交流</span>LFF2024JLJL ===</span>
<span class="t e" style="left:1606px;top:177px">交易模式:</span><span class="t e" style="left:1716px;top:177px;color:#0000e6">真实交易 0/10</span>
<span class="t e" style="left:1606px;top:197px">交易时间:</span><span class="t e" style="left:1716px;top:197px;color:#007a00">全天交易</span>
<span class="t e" style="left:1606px;top:217px">MACD状态:</span><span class="t e" style="left:1716px;top:217px;letter-spacing:.8px">-0.8528</span>
<span class="t e" style="left:1606px;top:236px">K线形态:</span><span class="t e" style="left:1716px;top:236px">无信号</span>
<span class="t e" style="left:1606px;top:256px">持仓状态:</span><span class="t e" style="left:1716px;top:256px">无持仓</span>
<span class="t e" style="left:1606px;top:277px">当前手数:</span><span class="t e" style="left:1716px;top:277px;letter-spacing:.8px">0.01</span>
<span class="t e" style="left:1606px;top:296px">连续亏损:</span><span class="t e" style="left:1716px;top:296px">0次</span>
<span class="t e" style="left:1606px;top:317px">最后盈亏:</span><span class="t e" style="left:1716px;top:317px;color:#007a00;letter-spacing:.8px">$8.44</span>
<div class="a" style="left:1605px;top:337px;width:100px;height:20px;box-sizing:border-box;background:#e60000;border:1px solid #fff;color:#fff;font-size:15.500px;letter-spacing:2.500px;text-align:center;line-height:18px">一键平仓</div>

<!-- dialog -->
<div class="a" style="left:684px;top:340px;width:901px;height:400px;background:#f9f9f9;border-radius:9px 9px 0 0;box-shadow:0 0 2px rgba(0,0,0,.4);overflow:hidden">
<div class="a" style="left:0;top:0;width:901px;height:37px;background:#f2f2f8"></div>
<div class="a" style="left:0;top:37px;width:901px;height:37px;background:#f0f0f0;border-bottom:1px solid #e4e4e4"></div>
<div style="position:absolute;left:0;top:0;width:901px;height:37px;filter:blur(1.2px)">
<div class="a" style="left:5px;top:12px;width:28px;height:18px;background:#dedee0"></div>
<div class="a" style="left:30px;top:8px;width:38px;height:22px;background:#e6e6e8"></div>
<div class="a" style="left:65px;top:5px;width:40px;height:25px;background:#d4d4d6"></div>
<div class="a" style="left:104px;top:6px;width:24px;height:24px;background:#b9b9bc"></div>
<div class="a" style="left:128px;top:6px;width:30px;height:24px;background:#d2d2d5"></div>
<div class="a" style="left:158px;top:5px;width:24px;height:19px;background:#e2e2e4"></div>
</div>
<div class="a" style="left:66px;top:15px;width:115px;height:6px;background:#ff5555;border-radius:3px"></div>
</div>
<span class="t" style="left:1492px;top:349px;font-size:16px;color:#333">?</span>
<svg style="left:1548px;top:351px" width="14" height="14" fill="none" stroke="#222" stroke-width="1.200"><path d="M1 1l12 12M13 1L1 13"/></svg>
<div class="a" style="left:696px;top:390px;width:52px;height:24px;background:#f6f6f6;border:1px solid #e4e4e4;box-sizing:border-box;padding-left:4px;line-height:23px;font-size:15px;color:#222">关于</div>
<div class="a" style="left:748px;top:390px;width:53px;height:24px;background:#f6f6f6;border:1px solid #e4e4e4;box-sizing:border-box;padding-left:7px;line-height:23px;font-size:15px;color:#222">常用</div>
<div class="a" style="left:801px;top:388px;width:76px;height:27px;background:#f9f9f9;border:1px solid #e0e0e0;border-bottom:0;box-sizing:border-box;text-align:center;line-height:23px;font-size:15px;color:#222">输入参数</div>
<div class="a" style="left:705px;top:424px;width:695px;height:304px;box-sizing:border-box;background:#fff;border:1.500px solid #8e959e"></div>
<div class="a" style="left:1378px;top:426px;width:21px;height:301px;background:#f0f0f0"></div>
<div class="a" style="left:1386px;top:447px;width:3px;height:83px;background:#8a8a8a;border-radius:2px"></div>
<div class="rw" style="top:452px"></div><div class="rw" style="top:477px;background:#ebebeb"></div><div class="rw" style="top:502px"></div><div class="rw" style="top:527px;background:#ebebeb"></div><div class="rw" style="top:552px"></div><div class="rw" style="top:577px;background:#ebebeb"></div><div class="rw" style="top:602px"></div><div class="rw" style="top:627px;background:#ebebeb"></div><div class="rw" style="top:652px"></div><div class="rw" style="top:677px;background:#ebebeb"></div><div class="rw" style="top:702px;border-bottom:0"></div>
<div class="a" style="left:1041px;top:426px;width:1px;height:301px;background:#d0d0d0"></div>
<svg style="left:707px;top:452px" width="24" height="280" font-size="11" font-family="Liberation Sans" text-anchor="middle">
<defs>
<path id="doc" d="M1 2a2 2 0 0 1 2-2h12l4 4v13a2 2 0 0 1-2 2l-3-1-3 1-3-1-3 1-3-1-2 1a1 1 0 0 1-1-1z"/>
</defs>
<g transform="translate(.5 2) scale(1.08)"><use href="#doc" fill="#f4dc86" stroke="#c4a83c"/><text x="10" y="13" fill="#4d3d0c">ab</text></g>
<g transform="translate(.5 27) scale(1.08)"><use href="#doc" fill="#a9e6ea" stroke="#5cb6c0"/><text x="10" y="13" fill="#1b6168" font-size="10">½</text></g>
<g transform="translate(.5 52) scale(1.08)"><use href="#doc" fill="#97c4ee" stroke="#4f8bc6"/><text x="10" y="13" fill="#123f6d" font-size="8.500" font-weight="bold">123</text></g>
<g transform="translate(.5 77) scale(1.08)"><use href="#doc" fill="#97c4ee" stroke="#4f8bc6"/><text x="10" y="13" fill="#123f6d" font-size="8.500" font-weight="bold">123</text></g>
<g transform="translate(.5 102) scale(1.08)"><use href="#doc" fill="#a8ea9a" stroke="#55b548"/><path d="M4 12l4-4 3 3M12 11h4" stroke="#11601a" stroke-width="1.500" fill="none"/></g>
<g transform="translate(.5 127) scale(1.08)"><use href="#doc" fill="#a9e6ea" stroke="#5cb6c0"/><text x="10" y="13" fill="#1b6168" font-size="10">½</text></g>
<g transform="translate(.5 152) scale(1.08)"><use href="#doc" fill="#97c4ee" stroke="#4f8bc6"/><text x="10" y="13" fill="#123f6d" font-size="8.500" font-weight="bold">123</text></g>
<g transform="translate(.5 177) scale(1.08)"><use href="#doc" fill="#97c4ee" stroke="#4f8bc6"/><text x="10" y="13" fill="#123f6d" font-size="8.500" font-weight="bold">123</text></g>
<g transform="translate(.5 202) scale(1.08)"><use href="#doc" fill="#a8ea9a" stroke="#55b548"/><path d="M4 12l4-4 3 3M12 11h4" stroke="#11601a" stroke-width="1.500" fill="none"/></g>
<g transform="translate(.5 227) scale(1.08)"><use href="#doc" fill="#97c4ee" stroke="#4f8bc6"/><text x="10" y="13" fill="#123f6d" font-size="8.500" font-weight="bold">123</text></g>
<g transform="translate(.5 252) scale(1.08)"><use href="#doc" fill="#f4dc86" stroke="#c4a83c"/><text x="10" y="13" fill="#4d3d0c">ab</text></g>
</svg>
<span class="t q" style="left:713px;top:430px">变量</span><span class="t q" style="left:1047px;top:430px">赋值</span>
<span class="t q" style="left:734px;top:455px">SETUP_PARAMETERS</span><span class="t q" style="left:1047px;top:455px">--- 交易设置 ---</span>
<span class="t q" style="left:734px;top:480px">初始手数</span><span class="t q" style="left:1047px;top:480px">0.01</span>
<span class="t q" style="left:734px;top:505px">止损点数</span><span class="t q" style="left:1047px;top:505px">300</span>
<span class="t q" style="left:734px;top:530px">止盈点数</span><span class="t q" style="left:1047px;top:530px">500</span>
<span class="t q" style="left:734px;top:555px">使用马丁格尔加仓</span><span class="t q" style="left:1047px;top:555px">true</span>
<span class="t q" style="left:734px;top:580px">加仓倍数</span><span class="t q" style="left:1047px;top:580px">2.0</span>
<span class="t q" style="left:734px;top:605px">最大连续亏损次数</span><span class="t q" style="left:1047px;top:605px">10</span>
<span class="t q" style="left:734px;top:630px">魔术码</span><span class="t q" style="left:1047px;top:630px">202502</span>
<span class="t q" style="left:734px;top:655px">启用前3次信号模拟亏损</span><span class="t q" style="left:1047px;top:655px">false</span>
<span class="t q" style="left:734px;top:680px">模拟亏损次数</span><span class="t q" style="left:1047px;top:680px">1</span>
<span class="t q" style="left:734px;top:705px">TIME_RESTRICTIONS</span><span class="t q" style="left:1047px;top:705px">--- 交易时间段设置 ---</span>
<div class="btn" style="top:640px">加载(<u>L</u>)</div>
<div class="btn" style="top:690px">保存(<u>S</u>)</div>

<!-- watermarks -->
<svg style="left:0;top:0" width="1919" height="734" font-size="41" font-family="Liberation Sans" text-anchor="middle" fill="#fff" fill-opacity=".1" stroke="#8a8a8a" stroke-opacity=".28" stroke-width="1">
<text x="125" y="140" transform="rotate(-36 125 125)">EAHub.cn</text><text x="375" y="140" transform="rotate(-36 375 125)">EAHub.cn</text><text x="625" y="140" transform="rotate(-36 625 125)">EAHub.cn</text><text x="875" y="140" transform="rotate(-36 875 125)">EAHub.cn</text><text x="1125" y="140" transform="rotate(-36 1125 125)">EAHub.cn</text><text x="1375" y="140" transform="rotate(-36 1375 125)">EAHub.cn</text><text x="1625" y="140" transform="rotate(-36 1625 125)">EAHub.cn</text><text x="1875" y="140" transform="rotate(-36 1875 125)">EAHub.cn</text>
<text x="125" y="395" transform="rotate(-36 125 380)">EAHub.cn</text><text x="375" y="395" transform="rotate(-36 375 380)">EAHub.cn</text><text x="625" y="395" transform="rotate(-36 625 380)">EAHub.cn</text><text x="875" y="395" transform="rotate(-36 875 380)">EAHub.cn</text><text x="1125" y="395" transform="rotate(-36 1125 380)">EAHub.cn</text><text x="1375" y="395" transform="rotate(-36 1375 380)">EAHub.cn</text><text x="1625" y="395" transform="rotate(-36 1625 380)">EAHub.cn</text><text x="1875" y="395" transform="rotate(-36 1875 380)">EAHub.cn</text>
<text x="125" y="640" transform="rotate(-36 125 625)">EAHub.cn</text><text x="375" y="640" transform="rotate(-36 375 625)">EAHub.cn</text><text x="625" y="640" transform="rotate(-36 625 625)">EAHub.cn</text><text x="875" y="640" transform="rotate(-36 875 625)">EAHub.cn</text><text x="1125" y="640" transform="rotate(-36 1125 625)">EAHub.cn</text><text x="1375" y="640" transform="rotate(-36 1375 625)">EAHub.cn</text><text x="1625" y="640" transform="rotate(-36 1625 625)">EAHub.cn</text><text x="1875" y="640" transform="rotate(-36 1875 625)">EAHub.cn</text>
</svg>
</body></html>
